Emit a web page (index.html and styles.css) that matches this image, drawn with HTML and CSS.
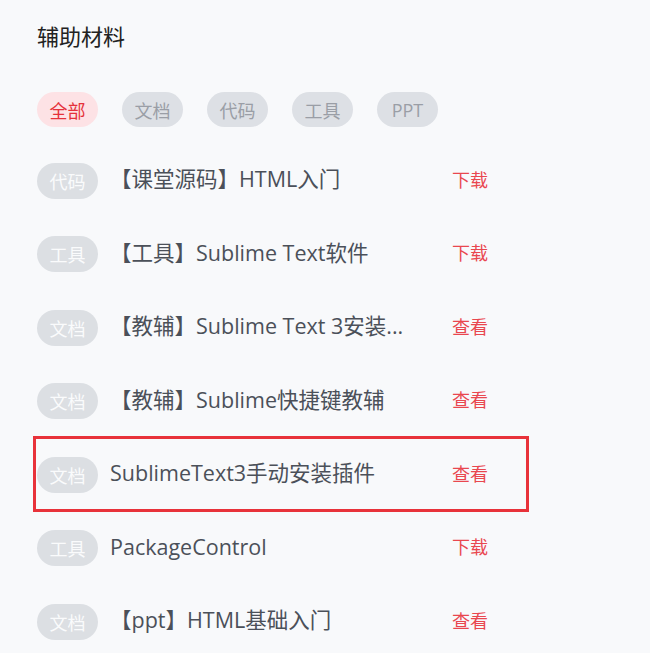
FILE: index.html
```html
<!DOCTYPE html>
<html lang="zh-CN">
<head>
<meta charset="utf-8">
<title>辅助材料</title>
<link rel="stylesheet" href="styles.css">
</head>
<body>
<div class="panel">
  <h2 class="panel-title">辅助材料</h2>
  <div class="tags">
    <span class="tag tag-active">全部</span>
    <span class="tag">文档</span>
    <span class="tag">代码</span>
    <span class="tag">工具</span>
    <span class="tag">PPT</span>
  </div>
  <ul class="list">
    <li class="row"><span class="badge">代码</span><span class="name">【课堂源码】HTML入门</span><a class="action">下载</a></li>
    <li class="row"><span class="badge">工具</span><span class="name">【工具】Sublime Text软件</span><a class="action">下载</a></li>
    <li class="row"><span class="badge">文档</span><span class="name">【教辅】Sublime Text 3安装...</span><a class="action">查看</a></li>
    <li class="row"><span class="badge">文档</span><span class="name">【教辅】Sublime快捷键教辅</span><a class="action">查看</a></li>
    <li class="row row-marked"><span class="badge">文档</span><span class="name">SublimeText3手动安装插件</span><a class="action">查看</a><span class="mark"></span></li>
    <li class="row"><span class="badge">工具</span><span class="name">PackageControl</span><a class="action">下载</a></li>
    <li class="row"><span class="badge">文档</span><span class="name">【ppt】HTML基础入门</span><a class="action">查看</a></li>
  </ul>
</div>
</body>
</html>
```

FILE: styles.css
```css
html, body {
  margin: 0;
  padding: 0;
  background: #f8f9fb;
}
body {
  font-family: "Open Sans", "Noto Sans CJK SC", sans-serif;
  width: 650px;
  height: 653px;
  overflow: hidden;
}
.panel {
  padding: 21px 0 0 37px;
}
.panel-title {
  margin: 0;
  font-size: 22px;
  line-height: 30px;
  font-weight: normal;
  color: #222;
}
.tags {
  display: flex;
  gap: 24px;
  margin-top: 41px;
}
.tag {
  width: 61px;
  height: 35px;
  border-radius: 18px;
  background: #dde0e5;
  color: #9a9ea6;
  font-size: 18px;
  display: flex;
  align-items: center;
  justify-content: center;
}
.tag-active {
  background: #fde2e5;
  color: #e5323b;
}
.list {
  list-style: none;
  margin: 35.5px 0 0 0;
  padding: 0;
  display: flex;
  flex-direction: column;
  gap: 37.5px;
}
.row {
  display: flex;
  align-items: center;
  height: 36px;
  position: relative;
}
.badge {
  width: 61px;
  height: 36px;
  border-radius: 18px;
  background: #dcdfe3;
  color: #fafbfc;
  font-size: 18px;
  display: flex;
  align-items: center;
  justify-content: center;
  flex: none;
}
.name {
  margin: -3px 0 0 12px;
  width: 300px;
  font-size: 21.5px;
  line-height: 30px;
  color: #4b5059;
  white-space: nowrap;
  flex: none;
}
.action {
  margin: -2px 0 0 42px;
  font-size: 18px;
  line-height: 26px;
  color: #e9474f;
}
.mark {
  position: absolute;
  left: -4px;
  top: -20.5px;
  width: 496px;
  height: 76px;
  box-sizing: border-box;
  border: 3px solid #e8323a;
  pointer-events: none;
}
```
